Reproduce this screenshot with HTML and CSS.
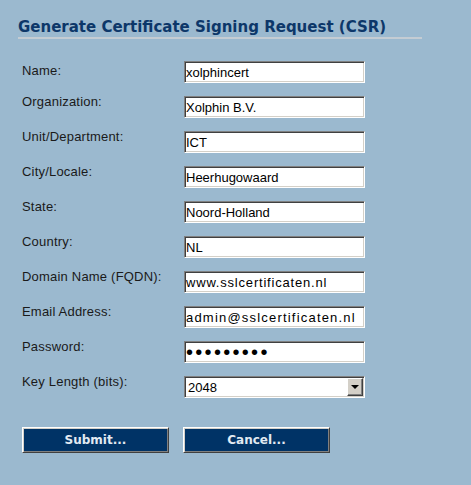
FILE: index.html
```html
<!DOCTYPE html>
<html lang="en">
<head>
  <meta charset="UTF-8" />
  <title>Generate CSR</title>
  <link rel="stylesheet" href="styles.css">
</head>
<body>
  <div class="csr">
    <h1 class="csr-title">Generate Certificate Signing Request (CSR)</h1>
    <form class="csr-form">
      <div class="row first">
        <label for="name">Name:</label>
        <input type="text" id="name" value="xolphincert">
      </div>
      <div class="row">
        <label for="org">Organization:</label>
        <input type="text" id="org" value="Xolphin B.V.">
      </div>
      <div class="row">
        <label for="unit">Unit/Department:</label>
        <input type="text" id="unit" value="ICT">
      </div>
      <div class="row">
        <label for="city">City/Locale:</label>
        <input type="text" id="city" value="Heerhugowaard">
      </div>
      <div class="row">
        <label for="state">State:</label>
        <input type="text" id="state" value="Noord-Holland">
      </div>
      <div class="row">
        <label for="country">Country:</label>
        <input type="text" id="country" value="NL">
      </div>
      <div class="row">
        <label for="domain">Domain Name (FQDN):</label>
        <input type="text" id="domain" class="wide" value="www.sslcertificaten.nl">
      </div>
      <div class="row">
        <label for="email">Email Address:</label>
        <input type="text" id="email" class="wider" value="admin@sslcertificaten.nl">
      </div>
      <div class="row">
        <label for="password">Password:</label>
        <input type="password" id="password" value="xolphin12">
      </div>
      <div class="row">
        <label for="keylen">Key Length (bits):</label>
        <div class="select-wrap">
          <select id="keylen">
            <option>2048</option>
            <option>4096</option>
          </select>
          <span class="select-arrow"></span>
        </div>
      </div>
      <div class="actions">
        <button type="button">Submit...</button>
        <button type="button">Cancel...</button>
      </div>
    </form>
  </div>
</body>
</html>
```

FILE: styles.css
```css
body {
  margin: 0;
  background: #9bb9cf;
  font-family: 'Liberation Sans', Arial, sans-serif;
}
.csr {
  width: 404px;
  padding: 19px 0 0 18px;
}
.csr-title {
  margin: 0;
  font-family: 'DejaVu Sans', Verdana, sans-serif;
  font-size: 15px;
  font-weight: bold;
  line-height: 17px;
  color: #0d3769;
  padding-bottom: 1px;
  border-bottom: 2px solid #c4ccd3;
}
.csr-form {
  margin-top: 22px;
  padding-left: 4px;
}
.row {
  display: flex;
  align-items: flex-start;
  height: 22px;
  margin-bottom: 13px;
}
.row label {
  width: 162px;
  font-size: 13px;
  line-height: 15px;
  letter-spacing: 0.2px;
  color: #1a1a1a;
  margin-top: -2px;
}
.row.first label {
  margin-top: 2px;
}
.row input,
.row select {
  box-sizing: border-box;
  width: 181px;
  height: 22px;
  margin: 0;
  padding: 0 0 0 1px;
  font-family: 'Liberation Sans', Arial, sans-serif;
  font-size: 13px;
  color: #000;
  background: #fff;
  border: 1px solid;
  border-color: #808080 #fff #fff #808080;
  box-shadow: inset 1px 1px 0 #404040, inset -1px -1px 0 #d4d0c8;
  outline: none;
  border-radius: 0;
}
.row input.wide {
  letter-spacing: 0.8px;
}
.row input.wider {
  letter-spacing: 1.2px;
}
.row input[type=password] {
  font-size: 20px;
  letter-spacing: 2.3px;
}
.select-wrap {
  position: relative;
  width: 181px;
  height: 22px;
}
.row select {
  appearance: none;
  -webkit-appearance: none;
  padding-left: 3px;
}
.select-arrow {
  position: absolute;
  right: 2px;
  top: 2px;
  width: 14px;
  height: 16px;
  background: #d4d0c8;
  border: 1px solid;
  border-color: #fff #404040 #404040 #fff;
  box-shadow: inset -1px -1px 0 #808080;
}
.select-arrow::after {
  content: "";
  position: absolute;
  left: 3px;
  top: 6px;
  border-left: 4px solid transparent;
  border-right: 4px solid transparent;
  border-top: 4px solid #000;
}
.actions {
  display: flex;
  gap: 14px;
  margin-top: 29px;
}
.actions button {
  width: 147px;
  height: 26px;
  padding: 0;
  background: #003366;
  color: #e2eaf2;
  font-family: 'DejaVu Sans', Verdana, sans-serif;
  font-size: 12px;
  font-weight: bold;
  border: 1px solid;
  border-color: #fff #404040 #404040 #fff;
  box-shadow: inset 1px 1px 0 #d4d0c8, inset -1px -1px 0 #808080;
  cursor: pointer;
}
```
